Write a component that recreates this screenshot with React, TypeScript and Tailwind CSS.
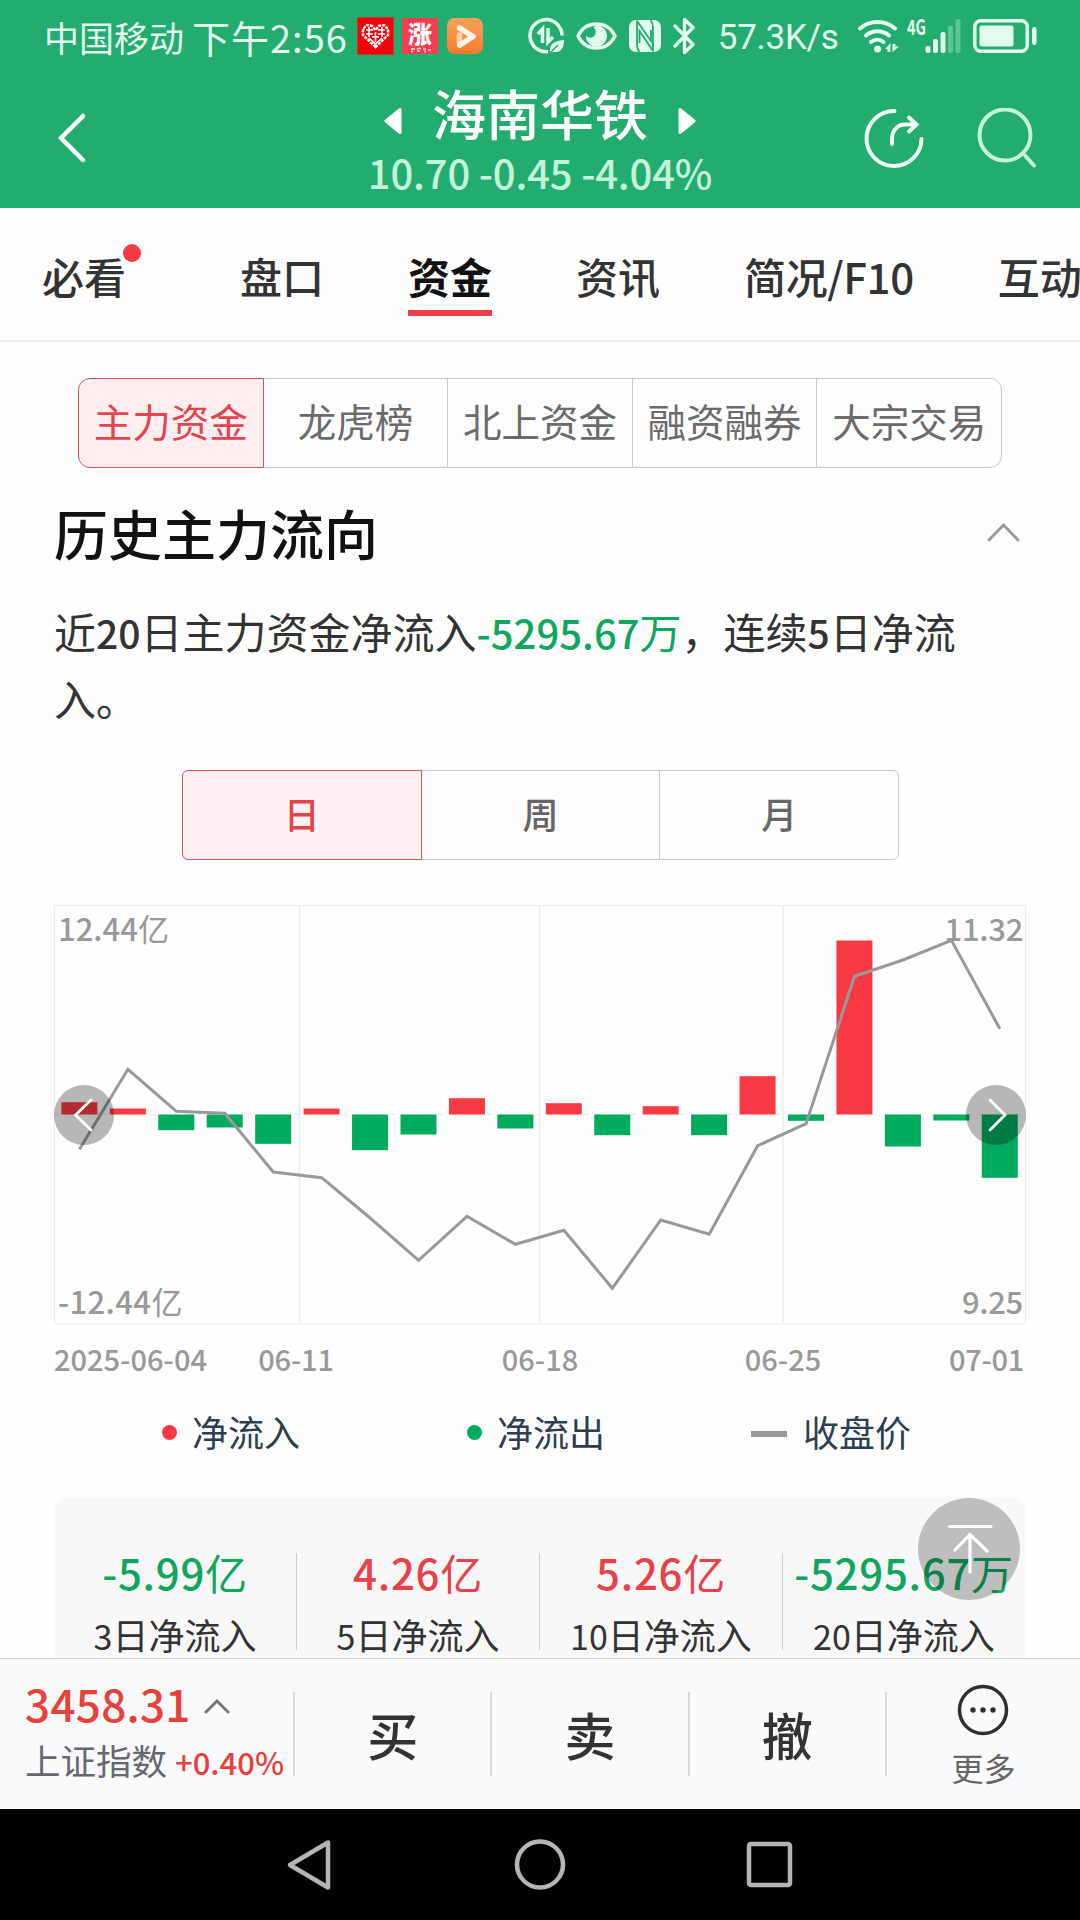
// Stock detail page, "capital flow" tab: header quote, section tabs,
// main-force net flow chart with closing price line, and the trade bar.

import { useState } from 'react';
import { clsx } from 'clsx';

const TABS = ['必看', '盘口', '资金', '资讯', '简况/F10', '互动'];
const SECTIONS = ['主力资金', '龙虎榜', '北上资金', '融资融券', '大宗交易'];
const PERIODS = ['日', '周', '月'];

// Bar extents in chart pixels; positive = net inflow (drawn upwards).
const FLOWS = [
  12.3, 6, -15.7, -13, -29.3, 6, -35.7, -20, 16.3, -14, 11.3, -20.7, 8.3, -20.7, 38.3, -6.3, 174, -32, -6, -63.3,
];

// Closing price line, y in chart pixels.
const CLOSES = [
  244.3, 164.3, 206.3, 208.3, 267, 272.7, 313, 355.3, 311.3, 339.3, 325.3, 383.3, 315, 329.3, 240.7, 218.7, 71.3, 55,
  35.3, 123.7,
];

const STEP = 48.44;
const BAR_WIDTH = 36;
const ZERO_Y = 209.5;

const SUMMARY = [
  { value: '-5.99', unit: '亿', days: '3', up: false },
  { value: '4.26', unit: '亿', days: '5', up: true },
  { value: '5.26', unit: '亿', days: '10', up: true },
  { value: '-5295.67', unit: '万', days: '20', up: false },
];

function StatusBar() {
  return (
    <div className="flex h-[72px] items-center pl-[44px] text-[#e3fbee]">
      <span className="pt-[2px] text-[35px] leading-[36px] whitespace-nowrap">中国移动</span>
      <span className="ml-[8px] pt-[1px] text-[38px] leading-[38px] tracking-[1px] whitespace-nowrap">下午2:56</span>

      {/* Notification icons */}
      <svg width="37" height="38" viewBox="0 0 37 38" className="ml-[9px] shrink-0">
        <rect x="0.5" y="0.5" width="36" height="37" fill="#f4000b" stroke="#b5402c" />
        <path
          d="M18.5 30 6 18v-6l4-4 5 1 3.500 4 3.500-4 5-1 4 4v6z"
          fill="none"
          stroke="#fff"
          strokeWidth="2.500"
          strokeDasharray="3 1"
        />
        <path d="M9 13h7M21 13h7M9 17h7M21 17h7M12 10v10M25 10v10M12 21l6.500 6 6.500-6M15 20h7M18.500 15v10" stroke="#fff" strokeWidth="1.600" fill="none" />
      </svg>
      <svg width="36" height="36" viewBox="0 0 36 36" className="ml-[8px] shrink-0">
        <rect width="36" height="36" fill="#f53d50" />
        <text x="18" y="25" textAnchor="middle" fontSize="24" fontWeight="900" fill="#fff">
          涨
        </text>
        <path d="M9 31h4M9 33.500h2M15 30.500h4M15 33h3M21 31h3M22 33.500h2M26 32h3" stroke="#ffd9dd" strokeWidth="1.500" />
      </svg>
      <svg width="36" height="36" viewBox="0 0 36 36" className="ml-[9px] shrink-0">
        <defs>
          <linearGradient id="player" x1="0" y1="0" x2="0" y2="1">
            <stop offset="0" stopColor="#fba35c" />
            <stop offset="1" stopColor="#f97a2b" />
          </linearGradient>
        </defs>
        <rect width="36" height="36" rx="8" fill="url(#player)" />
        <path d="M12.500 17v10" stroke="#fdd3ae" strokeWidth="5.500" strokeLinecap="round" />
        <path d="m12.500 10 13.500 8.500L13 27" fill="none" stroke="#fff4e6" strokeWidth="5.500" strokeLinecap="round" strokeLinejoin="round" />
      </svg>

      {/* Data saver */}
      <svg width="37" height="38" viewBox="0 0 37 38" className="ml-[45px] shrink-0" fill="none" stroke="currentColor">
        <path d="M20 34.500A16 16 0 1 1 34 18.500" strokeWidth="3.500" />
        <path d="m10 17 4.500-5v14M20 11v14l5-5" strokeWidth="3.500" />
        <path d="M22 36c-1-9 4-12 14-13 0 9-4 13-11 12z" fill="currentColor" stroke="none" />
        <path d="m22 36 8-8" stroke="#23ac70" strokeWidth="1.500" />
      </svg>
      <svg width="41" height="30" viewBox="0 0 41 30" className="ml-[11px] shrink-0">
        <path
          d="M2 15C10-1 31-1 39 15 31 31 10 31 2 15z"
          fill="none"
          stroke="currentColor"
          strokeWidth="3.500"
          strokeLinejoin="round"
        />
        <path d="M20 4.500a10.500 10.500 0 1 1-10 10c2 3 7 3 9-.5 1.500-3 .5-6-1.500-7.500z" fill="currentColor" />
      </svg>
      <svg width="32" height="32" viewBox="0 0 32 32" className="ml-[12px] shrink-0">
        <rect width="32" height="32" rx="7" fill="currentColor" />
        <path
          d="M8 0.500v24c0 3 .5 5 2.500 7.500M8 1l14 20V10M24 31.500v-24c0-3-.5-5-2.500-7.500M24 31 10.500 11v12"
          fill="none"
          stroke="#23ac70"
          strokeWidth="1.800"
        />
      </svg>
      <svg width="23" height="38" viewBox="0 0 23 38" className="ml-[12px] shrink-0">
        <path
          d="m2 9 18 18.500-8.500 8V2.500l8.500 8L2 29"
          fill="none"
          stroke="currentColor"
          strokeWidth="3.400"
          strokeLinejoin="round"
          strokeLinecap="round"
        />
      </svg>
      <span className="ml-[22px] w-[118px] pt-[3px] font-[Roboto,sans-serif] text-[35px] leading-[38px] tracking-[-0.300px] whitespace-nowrap">
        57.3K/s
      </span>

      {/* Wi-Fi with traffic arrows */}
      <svg width="42" height="36" viewBox="0 0 42 36" className="ml-[22px] shrink-0" fill="none" stroke="currentColor">
        <path d="M2 10.500a27 27 0 0 1 35 0" strokeWidth="4" strokeLinecap="round" />
        <path d="M8 17.500a18 18 0 0 1 23 0" strokeWidth="4" strokeLinecap="round" />
        <path d="M13 24a10 10 0 0 1 12.500 0" strokeWidth="4" strokeLinecap="round" />
        <circle cx="19.500" cy="31" r="3.500" fill="currentColor" stroke="none" />
        <path d="m27 31 5.500-6v9h-3v-3zM34.500 26h3v2.500H41L34.500 34z" fill="currentColor" stroke="none" />
      </svg>
      <svg width="54" height="36" viewBox="0 0 54 36" className="ml-[7px] shrink-0" fill="currentColor">
        <text x="0" y="17" fontSize="21" fontWeight="700" textLength="19" lengthAdjust="spacingAndGlyphs">
          4G
        </text>
        <rect x="18.500" y="28" width="5" height="7" rx="2" />
        <rect x="26" y="21" width="5" height="14" rx="2" />
        <rect x="33.500" y="14" width="5" height="21" rx="2" />
        <rect x="41" y="7.500" width="5" height="27.500" rx="2" opacity="0.3" />
        <rect x="48.500" y="1" width="5" height="34" rx="2" opacity="0.3" />
      </svg>
      <svg width="64" height="34" viewBox="0 0 64 34" className="ml-[12px] shrink-0">
        <rect x="1.800" y="1.800" width="52.500" height="30.500" rx="6" fill="none" stroke="currentColor" strokeWidth="3.500" />
        <rect x="6.500" y="6.500" width="34" height="21" rx="2" fill="currentColor" />
        <rect x="59" y="8" width="4.500" height="18" rx="2.200" fill="currentColor" />
      </svg>
    </div>
  );
}

function QuoteHeader() {
  return (
    <div className="grid h-[136px] grid-cols-[366px_348px_366px] items-start">
      <svg width="50" height="52" viewBox="0 0 50 52" className="mt-[40px] ml-[57px]">
        <path d="M26 4 4 26l22 22" fill="none" stroke="#fff" strokeWidth="4.500" strokeLinecap="round" />
      </svg>

      <div className="flex flex-col items-center pt-[14px]">
        <div className="flex items-center gap-[30px]">
          <svg width="18" height="28" viewBox="0 0 18 28" className="mt-[16px]">
            <path d="M2 14 16 2.500v23z" fill="#fff" stroke="#fff" strokeWidth="3" strokeLinejoin="round" />
          </svg>
          <h1 className="text-[54px] leading-[54px] font-medium text-white">海南华铁</h1>
          <svg width="18" height="28" viewBox="0 0 18 28" className="mt-[16px]">
            <path d="M16 14 2 2.500v23z" fill="#fff" stroke="#fff" strokeWidth="3" strokeLinejoin="round" />
          </svg>
        </div>
        <p className="mt-[12px] text-[40px] leading-[40px] font-medium tracking-[-0.200px] whitespace-nowrap text-[#c4f2db]">
          10.70 -0.45 -4.04%
        </p>
      </div>

      <div className="mt-[36px] mr-[42px] flex justify-end gap-[50px]">
        <svg width="62" height="62" viewBox="0 0 62 62" fill="none" stroke="#effdf5" strokeWidth="4" strokeLinecap="round">
          <path d="M30.500 3A27.500 27.500 0 1 0 57.500 31" />
          <path d="M28 36v-5c0-9 6-14.500 13-14.500h11M45 9.500l7.500 7-7.500 7" />
        </svg>
        <svg width="62" height="62" viewBox="0 0 62 62" fill="none" stroke="#c4f2db" strokeWidth="4" strokeLinecap="round">
          <circle cx="29" cy="27" r="25.500" />
          <path d="m49 47.500 9 10" />
        </svg>
      </div>
    </div>
  );
}

function TabBar() {
  const [active, setActive] = useState('资金');

  return (
    <nav className="flex h-[134px] shrink-0 items-start gap-[84px] overflow-hidden border-b-2 border-[#ecebf3] pl-[42px]">
      {TABS.map((tab, idx) => (
        <button
          key={tab}
          onClick={() => setActive(tab)}
          className={clsx('relative shrink-0 pt-[47px] text-[42px] leading-[42px] whitespace-nowrap', idx === 0 && 'mr-[30px]')}
        >
          <span
            className={clsx(
              tab === active ? 'font-bold text-[#111]' : 'font-medium text-[#333]',
              idx === 4 && 'tracking-[-0.400px]',
            )}
          >
            {tab}
          </span>
          {tab === active && <span className="mt-[13px] block h-[6px] bg-[#f03c46]" />}
          {idx === 0 && <span className="absolute top-[36px] -right-[15px] h-[18px] w-[18px] rounded-full bg-[#f73a44]" />}
        </button>
      ))}
    </nav>
  );
}

function SectionSwitch() {
  const [active, setActive] = useState(0);

  return (
    <div className="mx-[78px] mt-[36px] flex h-[90px] shrink-0">
      {SECTIONS.map((name, idx) => (
        <button
          key={name}
          onClick={() => setActive(idx)}
          className={clsx(
            'flex-1 border pb-1 text-[38.500px] whitespace-nowrap first:rounded-l-[12px] last:rounded-r-[12px] not-first:-ml-px',
            idx === active ? 'z-10 border-[#d9525b] bg-[#ffeeef] text-[#e2454e]' : 'border-[#c9c9c9] text-[#6b6b6b]',
          )}
        >
          {name}
        </button>
      ))}
    </div>
  );
}

function PeriodSwitch() {
  const [active, setActive] = useState(0);

  return (
    <div className="mt-[39px] mr-[181px] ml-[182px] flex h-[90px] shrink-0">
      {PERIODS.map((name, idx) => (
        <button
          key={name}
          onClick={() => setActive(idx)}
          className={clsx(
            'flex-1 border pb-1 text-[36px] font-medium first:rounded-l-[6px] last:rounded-r-[6px] not-first:-ml-px',
            idx === active ? 'z-10 border-[#d9525b] bg-[#fdf1f3] text-[#e2454e]' : 'border-[#c9c9c9] text-[#666]',
          )}
        >
          {name}
        </button>
      ))}
    </div>
  );
}

function FlowChart() {
  const points = CLOSES.map((y, i) => `${25.5 + i * STEP},${y}`).join(' ');

  return (
    <div className="relative mx-[54px] mt-[45px] h-[420px] shrink-0 text-[31px] leading-[32px] font-medium text-[#999]">
      <svg width="972" height="420" viewBox="0 0 972 420" className="block">
        <rect x="0.5" y="0.5" width="971" height="418.500" fill="none" stroke="#ececec" />
        <path d="M245.500 0v417M485.500 0v417M729 0v417" stroke="#ececec" strokeWidth="1.500" />
        <path d={`M0 ${ZERO_Y}H972`} stroke="#ebebeb" strokeWidth="1" strokeDasharray="6 6" />
        {FLOWS.map((v, i) => (
          <rect
            key={i}
            x={7.4 + i * STEP}
            y={v > 0 ? ZERO_Y - v : ZERO_Y}
            width={BAR_WIDTH}
            height={Math.abs(v)}
            fill={v > 0 ? '#f83a44' : '#00ab5e'}
          />
        ))}
        <polyline points={points} fill="none" stroke="#999" strokeWidth="3" />
      </svg>

      <span className="absolute top-[7px] left-[4px]">
        12.44<span className="font-normal">亿</span>
      </span>
      <span className="absolute top-[380px] left-[4px] tracking-[0.400px]">
        -12.44<span className="font-normal">亿</span>
      </span>
      <span className="absolute top-[7px] right-[3px] tracking-[-0.300px]">11.32</span>
      <span className="absolute top-[380px] right-[3px] tracking-[-0.300px]">9.25</span>

      <button className="absolute top-[180px] left-0 h-[60px] w-[60px] rounded-full bg-black/[0.28]">
        <svg width="60" height="60" viewBox="0 0 60 60">
          <path d="M37 15 21.500 30 37 45" fill="none" stroke="#fff" strokeWidth="2.800" strokeLinecap="round" />
        </svg>
      </button>
      <button className="absolute top-[180px] right-0 h-[60px] w-[60px] rounded-full bg-black/[0.28]">
        <svg width="60" height="60" viewBox="0 0 60 60">
          <path d="m24 15 15 15-15 15" fill="none" stroke="#fff" strokeWidth="2.800" strokeLinecap="round" />
        </svg>
      </button>
    </div>
  );
}

function ChartFooter() {
  return (
    <>
      <div className="mt-[18px] ml-[54px] grid h-[30px] shrink-0 grid-cols-[182px_120px_368px_118px_182px] text-center text-[29px] leading-[30px] font-medium whitespace-nowrap text-[#999]">
        <span className="text-left">2025-06-04</span>
        <span className="tracking-[-0.200px]">06-11</span>
        <span>06-18</span>
        <span>06-25</span>
        <span className="text-right tracking-[-0.300px]">07-01</span>
      </div>

      <div className="mt-[40px] ml-[162px] flex h-[36px] shrink-0 text-[36px] leading-[36px] text-[#2c3e50]">
        <div className="flex w-[305px] items-center gap-[15px]">
          <i className="mt-[3px] h-[15px] w-[15px] rounded-full bg-[#f73a44]" />
          净流入
        </div>
        <div className="flex w-[284px] items-center gap-[15px]">
          <i className="mt-[3px] h-[15px] w-[15px] rounded-full bg-[#00ab5e]" />
          净流出
        </div>
        <div className="flex items-center gap-[16px]">
          <i className="mt-[5px] h-[6px] w-[36px] bg-[#999]" />
          收盘价
        </div>
      </div>
    </>
  );
}

function SummaryCard() {
  return (
    <div className="relative mx-[54px] mt-[48px] flex h-[240px] shrink-0 rounded-[12px] bg-[#f8f8f8] pt-[56px]">
      {SUMMARY.map((item) => (
        <div
          key={item.days}
          className="h-[97px] w-[243px] border-r border-[#ccc] text-center whitespace-nowrap last-of-type:border-transparent"
        >
          <p
            className={clsx(
              'pt-[2px] text-[42px] leading-[34px] font-medium tracking-[0.700px]',
              item.up ? 'text-[#e8414b]' : 'text-[#0fa65f]',
            )}
          >
            {item.value}
            <span className="font-normal">{item.unit}</span>
          </p>
          <p className="mt-[27px] text-[36px] leading-[36px] text-[#333]">
            <span className="text-[34px] leading-none">{item.days}</span>日净流入
          </p>
        </div>
      ))}

      {/* Back to top */}
      <button className="absolute top-[1px] right-[6px] h-[102px] w-[102px] rounded-full bg-black/[0.23]">
        <svg width="102" height="102" viewBox="0 0 102 102" fill="none" stroke="#fff" strokeWidth="3.200" strokeLinecap="round">
          <path d="M31.500 28.500H73M52 37v37M37 52l15-15.500L69 53" />
        </svg>
      </button>
    </div>
  );
}

function TradeBar() {
  return (
    <footer className="flex h-[151px] shrink-0 border-t border-[#d0d0d0] bg-[#fafafc]">
      <div className="w-[293px] pt-[22px] pl-[25px] whitespace-nowrap">
        <div className="flex items-center gap-[13px]">
          <span className="text-[44px] leading-[44px] font-medium tracking-[0.300px] text-[#e8403a]">3458.31</span>
          <svg width="26" height="16" viewBox="0 0 26 16" className="mt-[6px]">
            <path d="M2 14 13 3l11 11" fill="none" stroke="#777" strokeWidth="3" strokeLinecap="round" />
          </svg>
        </div>
        <div className="mt-[17px] flex items-baseline gap-[8px] text-[35.500px] leading-[36px] text-[#666870]">
          上证指数
          <span className="text-[31px] font-medium text-[#e8403a]">+0.40%</span>
        </div>
      </div>

      {['买', '卖', '撤'].map((action) => (
        <div key={action} className="flex w-[197.300px] items-center">
          <span className="h-[84px] w-[2px] bg-[#d9d9db]" />
          <button className="flex-1 text-[51px] leading-[51px] font-medium text-[#333]">{action}</button>
        </div>
      ))}

      <div className="flex flex-1 items-center">
        <span className="h-[84px] w-[2px] bg-[#d9d9db]" />
        <button className="flex flex-1 flex-col items-center pb-[2px]">
          <svg width="52" height="52" viewBox="0 0 52 52">
            <circle cx="26" cy="26" r="23.500" fill="none" stroke="#2f2f2f" strokeWidth="3.500" />
            <circle cx="16" cy="26" r="2.700" fill="#2f2f2f" />
            <circle cx="26" cy="26" r="2.700" fill="#2f2f2f" />
            <circle cx="36" cy="26" r="2.700" fill="#2f2f2f" />
          </svg>
          <span className="mt-[15px] text-[32px] leading-[32px] text-[#666]">更多</span>
        </button>
      </div>
    </footer>
  );
}

function SystemNav() {
  return (
    <div className="flex h-[111px] shrink-0 items-center justify-center gap-[177px] bg-black">
      <svg width="54" height="54" viewBox="0 0 54 54" fill="none" stroke="#b5b5b5" strokeWidth="4.500" strokeLinejoin="round">
        <path d="M8 27 46 4.500v45z" />
      </svg>
      <svg width="54" height="54" viewBox="0 0 54 54" fill="none" stroke="#b5b5b5" strokeWidth="4.500">
        <circle cx="27" cy="26.500" r="23" />
      </svg>
      <svg width="54" height="54" viewBox="0 0 54 54" fill="none" stroke="#b5b5b5" strokeWidth="4.500">
        <rect x="5" y="6" width="41" height="41" rx="2" />
      </svg>
    </div>
  );
}

export default function App() {
  return (
    <div className="flex h-[1920px] w-[1080px] flex-col overflow-hidden bg-[#fefefe] font-['Noto_Sans_CJK_SC',sans-serif]">
      <header className="h-[208px] shrink-0 bg-[#23ac70]">
        <StatusBar />
        <QuoteHeader />
      </header>
      <TabBar />

      <main className="flex min-h-0 flex-1 flex-col overflow-hidden">
        <SectionSwitch />
        <div className="mt-[38px] mr-[60px] ml-[54px] flex shrink-0 items-center justify-between">
          <h2 className="text-[54px] leading-[54px] font-medium text-[#111]">历史主力流向</h2>
          <svg width="33" height="20" viewBox="0 0 33 20" className="mb-[3px]">
            <path d="M2 18 16.500 3 31 18" fill="none" stroke="#999" strokeWidth="2.800" strokeLinecap="round" />
          </svg>
        </div>
        <p className="mt-[37px] ml-[54px] h-[134px] shrink-0 text-[42px] leading-[67px] whitespace-nowrap text-[#333]">
          近<b className="text-[39px] leading-none font-medium">20</b>日主力资金净流入
          <span className="text-[#0fa65f]">
            <b className="text-[40px] leading-none font-medium">-5295.67</b>万
          </span>
          ，连续<b className="text-[39px] leading-none font-medium">5</b>日净流
          <br />
          入。
        </p>
        <PeriodSwitch />
        <FlowChart />
        <ChartFooter />
        <SummaryCard />
      </main>

      <TradeBar />
      <SystemNav />
    </div>
  );
}
